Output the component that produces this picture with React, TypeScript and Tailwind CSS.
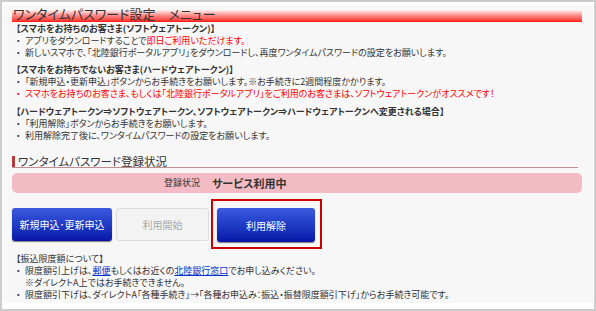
import React from "react";

const Bullet = ({ children, red }: { children: React.ReactNode; red?: boolean }) => (
  <div className={`flex h-[12px] items-center leading-[12px] ${red ? "text-[#ff0000]" : ""}`}>
    <span className="w-[9px] shrink-0">・</span>
    <span className="whitespace-nowrap">{children}</span>
  </div>
);

const Head = ({ children }: { children: React.ReactNode }) => (
  <div className="h-[12px] leading-[12px] font-bold whitespace-nowrap">{children}</div>
);

export default function App() {
  return (
    <div className="w-[596px] h-[311px] border-2 border-[#cccccc] bg-white pt-[3px] pl-[1px] pr-[1px] pb-[6px] font-['Noto_Sans_CJK_JP',sans-serif] text-[#333333] [font-feature-settings:'palt']">
      <div className="h-full bg-[#f7f7f7] pl-[9px] pr-[11px] pt-[1px]">
        <h2 className="h-[16px] text-[13px] leading-[16px] pl-[1px] whitespace-nowrap bg-gradient-to-b from-[#fdf0f0] via-[#ff8080] to-[#ff0000] bg-no-repeat bg-bottom bg-[length:100%_12px]">
          ワンタイムパスワード設定　メニュー
        </h2>

        <div className="pl-[4px] text-[9px] mt-[1px]">
          <Head>【スマホをお持ちのお客さま(ソフトウェアトークン)】</Head>
          <Bullet>
            アプリをダウンロードすることで<span className="text-[#ff0000]">即日ご利用いただけます。</span>
          </Bullet>
          <Bullet>新しいスマホで、「北陸銀行ポータルアプリ」をダウンロードし、再度ワンタイムパスワードの設定をお願いします。</Bullet>

          <div className="mt-[5px]">
            <Head>【スマホをお持ちでないお客さま(ハードウェアトークン)】</Head>
            <Bullet>「新規申込・更新申込」ボタンからお手続きをお願いします。※お手続きに2週間程度かかります。</Bullet>
            <Bullet red>スマホをお持ちのお客さま、もしくは「北陸銀行ポータルアプリ」をご利用のお客さまは、ソフトウェアトークンがオススメです！</Bullet>
          </div>

          <div className="mt-[6px]">
            <Head>【ハードウェアトークン⇒ソフトウェアトークン、ソフトウェアトークン⇒ハードウェアトークンへ変更される場合】</Head>
            <Bullet>「利用解除」ボタンからお手続きをお願いします。</Bullet>
            <Bullet>利用解除完了後に、ワンタイムパスワードの設定をお願いします。</Bullet>
          </div>
        </div>

        <div className="mt-[14px] mr-[4px] border-b border-[#c09090]">
          <div className="border-l-[3px] border-[#b83c3c] pl-[3px] text-[11.5px] leading-[11px] h-[11px] whitespace-nowrap">
            ワンタイムパスワード登録状況
          </div>
        </div>

        <div className="mt-[5px] h-[20px] rounded-[5px] bg-[#f3bcc5] flex items-center pl-[152px]">
          <span className="text-[9px]">登録状況</span>
          <span className="ml-[12px] text-[11px] font-bold">サービス利用中</span>
        </div>

        <div className="mt-[6px] flex items-center">
          <button className="w-[100px] h-[33px] rounded-[3px] bg-gradient-to-b from-[#3a5ae0] to-[#0a14a8] text-white text-[10px] shadow-[0_1px_1px_rgba(0,0,0,0.5)]">
            新規申込･更新申込
          </button>
          <button className="ml-[4px] w-[93px] h-[33px] rounded-[3px] bg-[#f3f3f3] border border-[#dddddd] text-[#aaaaaa] text-[10px]">
            利用開始
          </button>
          <div className="ml-[2px] border-2 border-[#cc0000] pl-[4px] pr-[5px] pt-[7px] pb-[5px]">
            <button className="w-[98px] h-[34px] rounded-[3px] bg-gradient-to-b from-[#3a5ae0] to-[#0a14a8] text-white text-[10px] shadow-[0_1px_1px_rgba(0,0,0,0.5)] block">
              利用解除
            </button>
          </div>
        </div>

        <div className="mt-[4px] pl-[4px] text-[9px]">
          <div className="h-[12px] leading-[12px]">【振込限度額について】</div>
          <Bullet>
            限度額引上げは、<span className="text-[#0033cc] underline">郵便</span>もしくはお近くの
            <span className="text-[#0033cc] underline">北陸銀行窓口</span>でお申し込みください。
          </Bullet>
          <div className="h-[12px] leading-[12px] pl-[9px]">※ダイレクトA上ではお手続きできません。</div>
          <Bullet>限度額引下げは、ダイレクトA「各種手続き」→「各種お申込み：振込・振替限度額引下げ」からお手続き可能です。</Bullet>
        </div>
      </div>
    </div>
  );
}
